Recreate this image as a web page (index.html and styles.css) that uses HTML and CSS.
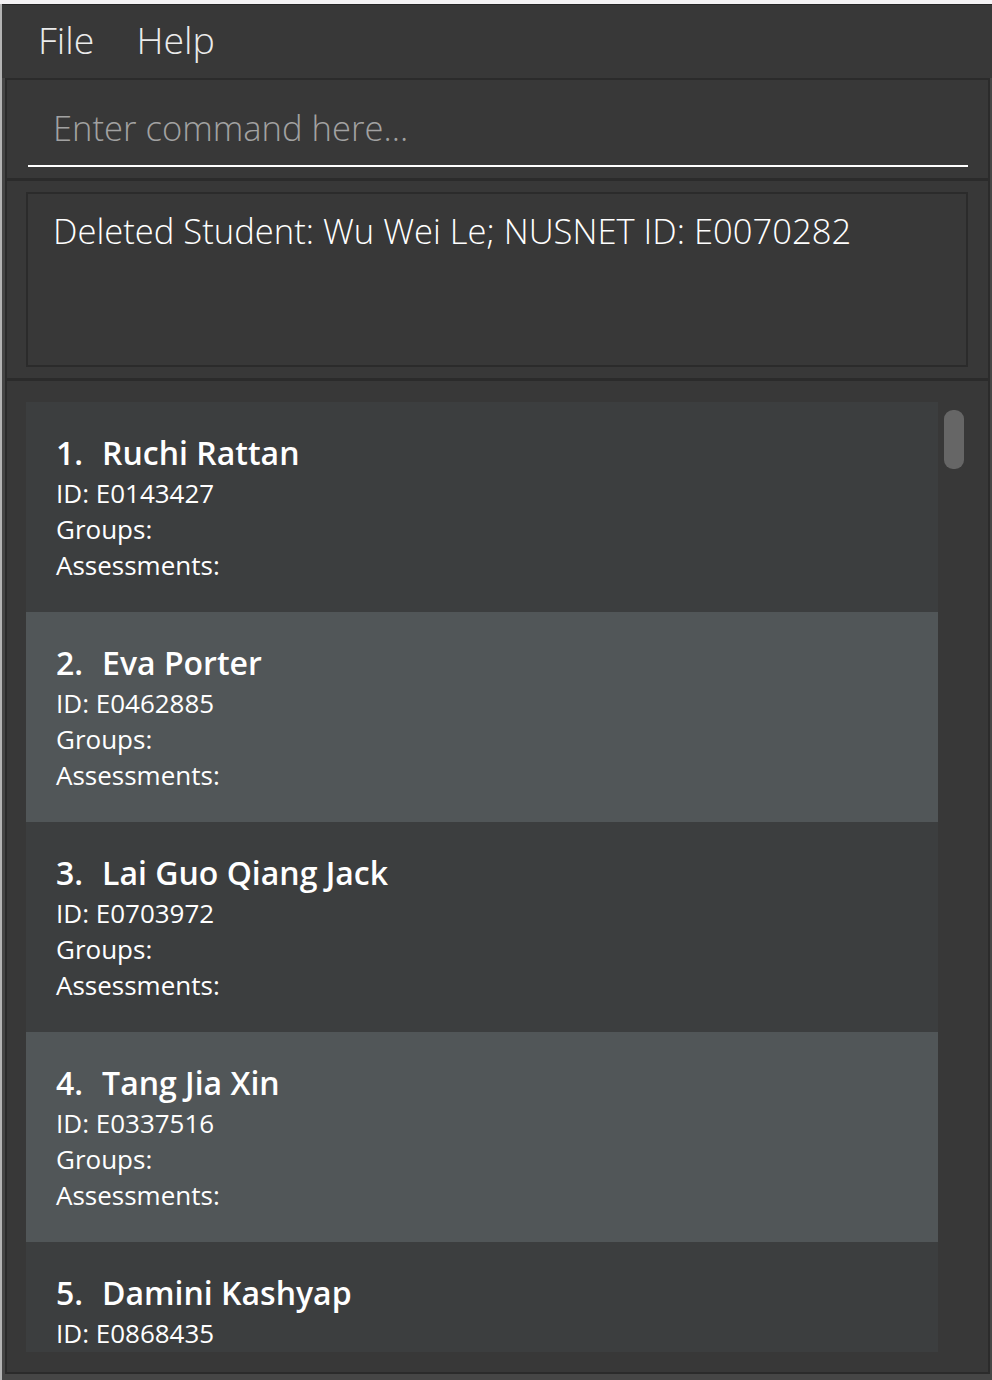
FILE: index.html
```html
<!DOCTYPE html>
<html>
<head>
<meta charset="utf-8">
<link rel="stylesheet" href="styles.css">
</head>
<body>
<div class="screen">
  <div class="topstrip"></div>
  <div class="row">
    <div class="leftedge"></div>
    <div class="window">
      <div class="menubar">
        <span class="menu-item">File</span>
        <span class="menu-item">Help</span>
      </div>
      <div class="panes">
        <div class="command-pane">
          <div class="command-field">Enter command here...</div>
        </div>
        <div class="result-pane">
          <div class="result-box">Deleted Student: Wu Wei Le; NUSNET ID: E0070282</div>
        </div>
        <div class="list-pane">
          <div class="list-view">
            <div class="cells">
              <div class="cell odd">
                <div class="title"><span class="num">1.</span><span class="name">Ruchi Rattan</span></div>
                <div class="detail">ID: E0143427</div>
                <div class="detail">Groups:</div>
                <div class="detail">Assessments:</div>
              </div>
              <div class="cell even">
                <div class="title"><span class="num">2.</span><span class="name">Eva Porter</span></div>
                <div class="detail">ID: E0462885</div>
                <div class="detail">Groups:</div>
                <div class="detail">Assessments:</div>
              </div>
              <div class="cell odd">
                <div class="title"><span class="num">3.</span><span class="name">Lai Guo Qiang Jack</span></div>
                <div class="detail">ID: E0703972</div>
                <div class="detail">Groups:</div>
                <div class="detail">Assessments:</div>
              </div>
              <div class="cell even">
                <div class="title"><span class="num">4.</span><span class="name">Tang Jia Xin</span></div>
                <div class="detail">ID: E0337516</div>
                <div class="detail">Groups:</div>
                <div class="detail">Assessments:</div>
              </div>
              <div class="cell odd">
                <div class="title"><span class="num">5.</span><span class="name">Damini Kashyap</span></div>
                <div class="detail">ID: E0868435</div>
              </div>
            </div>
            <div class="scroll-track">
              <div class="scroll-thumb"></div>
            </div>
          </div>
        </div>
      </div>
    </div>
  </div>
</div>
</body>
</html>
```

FILE: styles.css
```css
html, body {
  margin: 0;
  padding: 0;
}
body {
  background: #464646;
  font-family: "Open Sans", "Liberation Sans", sans-serif;
  width: 992px;
  height: 1380px;
  overflow: hidden;
}
.screen {
  display: flex;
  flex-direction: column;
  width: 992px;
  height: 1380px;
}
.topstrip {
  height: 4px;
  background: #f4f2f4;
  flex: none;
}
.row {
  display: flex;
  flex: 1;
}
.leftedge {
  width: 2px;
  background: #b4b4b4;
  flex: none;
}
.window {
  flex: 1;
  background: #464646;
  display: flex;
  flex-direction: column;
}
.menubar {
  height: 74px;
  flex: none;
  background: #383838;
  display: flex;
  gap: 42px;
  padding-left: 36px;
  box-shadow: inset 0 1px 0 #262626;
}
.menu-item {
  font-size: 37.5px;
  font-weight: 300;
  line-height: 72px;
  color: #ffffff;
  opacity: 0.9;
}
.panes {
  flex: none;
  margin-left: 3px;
  width: 981px;
  background: #383838;
  border: 2px solid #2b2b2b;
  display: flex;
  flex-direction: column;
}
.command-pane {
  height: 101px;
  box-sizing: border-box;
  padding: 26px 20px 0 21px;
  border-bottom: 3px solid #2b2b2b;
}
.command-field {
  font-size: 34.6px;
  font-weight: 300;
  line-height: 44px;
  color: #a2a2a2;
  padding-left: 25px;
  padding-bottom: 15px;
  border-bottom: 2px solid #ffffff;
  white-space: nowrap;
}
.result-pane {
  height: 200px;
  box-sizing: border-box;
  padding: 11px 20px 0 19px;
  border-bottom: 3px solid #2b2b2b;
}
.result-box {
  height: 175px;
  box-sizing: border-box;
  border: 2px solid #2b2b2b;
  padding: 13px 0 0 25px;
  font-size: 34.6px;
  font-weight: 300;
  line-height: 48px;
  color: #ffffff;
  white-space: nowrap;
}
.list-pane {
  height: 991px;
  box-sizing: border-box;
  padding: 21px 0 20px 19px;
}
.list-view {
  display: flex;
  height: 950px;
}
.cells {
  width: 912px;
  height: 950px;
  overflow: hidden;
  flex: none;
}
.cell {
  height: 210px;
  box-sizing: border-box;
  padding: 31px 0 0 30px;
  color: #ffffff;
}
.cell.odd {
  background: #3c3e3f;
}
.cell.even {
  background: #515658;
}
.title {
  display: flex;
  gap: 19px;
  font-size: 32px;
  font-weight: 600;
  line-height: 40px;
  margin-bottom: 2px;
  white-space: nowrap;
}
.detail {
  font-size: 26px;
  font-weight: 400;
  line-height: 36px;
  white-space: nowrap;
}
.scroll-track {
  width: 30px;
  flex: none;
  padding: 8px 0 0 6px;
  box-sizing: border-box;
}
.scroll-thumb {
  width: 20px;
  height: 59px;
  border-radius: 9px;
  background: #666666;
}
```
